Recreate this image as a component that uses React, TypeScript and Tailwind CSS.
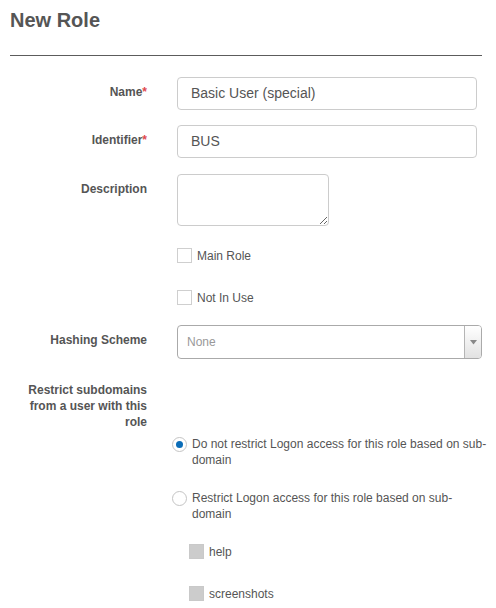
import type { ReactNode } from 'react'

const labelCls = 'w-[137px] shrink-0 text-right text-[12px] font-bold leading-4 text-[#555]'

function Row({ label, required, top = 'pt-[7px]', className = '', children }: {
  label?: ReactNode
  required?: boolean
  top?: string
  className?: string
  children?: ReactNode
}): ReactNode {
  return (
    <div className={`flex ${className}`}>
      <div className={`${labelCls} ${top}`}>
        {label}
        {required ? <span className="text-[#e0474c]">*</span> : null}
      </div>
      <div className="ml-[30px] min-w-0 flex-1">{children}</div>
    </div>
  )
}

function Checkbox({ label, disabled = false, className = '' }: {
  label: string
  disabled?: boolean
  className?: string
}): ReactNode {
  return (
    <label className={`flex h-[15px] items-center ${className}`}>
      <span
        className={`h-[15px] w-[15px] shrink-0 border ${
          disabled ? 'border-[#c9c9c9] bg-[#cccccc]' : 'border-[#cfcfcf] bg-white'
        }`}
      />
      <span className="ml-[5px] text-[12px] leading-4 text-[#555]">{label}</span>
    </label>
  )
}

function Radio({ checked, children, className = '' }: {
  checked?: boolean
  children: ReactNode
  className?: string
}): ReactNode {
  return (
    <div className={`-ml-[5px] flex ${className}`}>
      <span className="mt-[1px] flex h-[15px] w-[15px] shrink-0 items-center justify-center rounded-full border border-[#c4c4c4] bg-white">
        {checked ? <span className="h-[7px] w-[7px] rounded-full bg-[#0b6db8]" /> : null}
      </span>
      <span className="ml-[5px] w-[302px] shrink-0 text-[12px] leading-4 text-[#555]">{children}</span>
    </div>
  )
}

export default function App(): ReactNode {
  return (
    <div className="h-[608px] w-[496px] overflow-hidden bg-white px-[10px] font-['Liberation_Sans',Arial,sans-serif]">
      <h1 className="pt-[9px] text-[20px] font-bold leading-[22px] text-[#555]">New Role</h1>
      <div className="mt-[24px] w-[472px] border-t border-[#5c5c5c]" />

      <Row label="Name" required className="mt-[21px]">
        <div className="flex h-[33px] w-[300px] items-center rounded-[4px] border border-[#cccccc] pl-[13px] text-[14px] text-[#555]">
          Basic User (special)
        </div>
      </Row>

      <Row label="Identifier" required className="mt-[15px]">
        <div className="flex h-[33px] w-[300px] items-center rounded-[4px] border border-[#cccccc] pl-[13px] text-[14px] text-[#555]">
          BUS
        </div>
      </Row>

      <Row label="Description" className="mt-[16px]">
        <textarea
          readOnly
          className="block h-[52px] w-[152px] rounded-[4px] border border-[#cccccc] outline-none"
        />
      </Row>

      <Row top="pt-0" className="mt-[22px]">
        <Checkbox label="Main Role" />
      </Row>

      <Row top="pt-0" className="mt-[27px]">
        <Checkbox label="Not In Use" />
      </Row>

      <Row label="Hashing Scheme" className="mt-[20px]">
        <div className="flex h-[34px] w-[305px] overflow-hidden rounded-[4px] border border-[#aaaaaa]">
          <div className="flex flex-1 items-center pl-[9px] text-[12px] text-[#999]">None</div>
          <div className="flex w-[17px] items-center justify-center border-l border-[#b5b5b5] bg-gradient-to-b from-white to-[#e2e2e2]">
            <svg width="7" height="5" viewBox="0 0 7 5">
              <path d="M0 0h7L3.5 4.5z" fill="#888" />
            </svg>
          </div>
        </div>
      </Row>

      <Row label="Restrict subdomains from a user with this role" top="pt-0" className="mt-[23px]" />

      <Row top="pt-0" className="mt-[6px]">
        <Radio checked>
          Do not restrict Logon access for this role based on sub-
          <br />
          domain
        </Radio>
        <Radio className="mt-[22px]">
          Restrict Logon access for this role based on sub-
          <br />
          domain
        </Radio>
        <div className="ml-[12px]">
          <Checkbox label="help" disabled className="mt-[22px]" />
          <Checkbox label="screenshots" disabled className="mt-[27px]" />
        </div>
      </Row>
    </div>
  )
}
